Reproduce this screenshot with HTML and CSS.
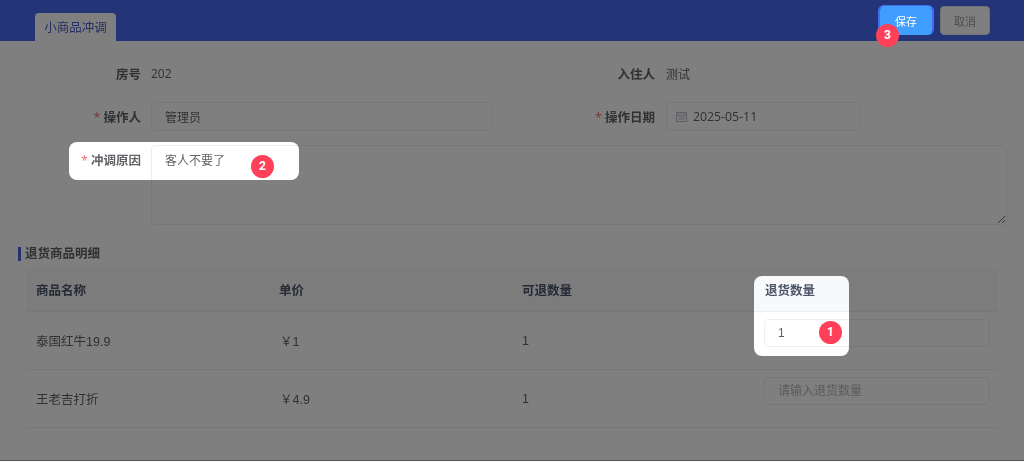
FILE: index.html
```html
<!DOCTYPE html>
<html lang="zh-CN">

<head>
    <meta charset="UTF-8">
    <meta name="viewport" content="width=device-width, initial-scale=1.0">
    <title>小商品冲调</title>
    <link rel="stylesheet" href="styles.css">
</head>

<body>
    <div class="page">
        <header class="topbar">
            <div class="tab">小商品冲调</div>
            <div class="actions">
                <button class="btn btn-save" type="button">保存</button>
                <button class="btn btn-cancel" type="button">取消</button>
            </div>
        </header>

        <form class="form">
            <div class="row">
                <div class="field">
                    <label class="label">房号</label>
                    <span class="value">202</span>
                </div>
                <div class="field field-right">
                    <label class="label">入住人</label>
                    <span class="value">测试</span>
                </div>
            </div>
            <div class="row">
                <div class="field">
                    <label class="label"><i class="req">*</i>操作人</label>
                    <input class="input input-wide" type="text" value="管理员">
                </div>
                <div class="field field-right">
                    <label class="label"><i class="req">*</i>操作日期</label>
                    <div class="date">
                        <svg class="date-icon" viewBox="0 0 11 11" width="11" height="11">
                            <path d="M.5 1.5h10v9H.5z M.5 4h10 M3 .5v2 M8 .5v2 M2.5 6h6 M2.5 8h6" fill="none" stroke="#b8bbc2" stroke-width="1"/>
                        </svg>
                        <span>2025-05-11</span>
                    </div>
                </div>
            </div>
            <div class="row">
                <div class="field field-full">
                    <label class="label label-top"><i class="req">*</i>冲调原因</label>
                    <textarea class="textarea">客人不要了</textarea>
                </div>
            </div>
        </form>

        <h3 class="section-title">退货商品明细</h3>

        <table class="goods">
            <thead>
                <tr>
                    <th>商品名称</th>
                    <th>单价</th>
                    <th>可退数量</th>
                    <th>退货数量</th>
                </tr>
            </thead>
            <tbody>
                <tr>
                    <td>泰国红牛19.9</td>
                    <td class="price">￥1</td>
                    <td>1</td>
                    <td class="qty"><input class="input input-qty" type="text" value="1" placeholder="请输入退货数量"></td>
                </tr>
                <tr>
                    <td>王老吉打折</td>
                    <td class="price">￥4.9</td>
                    <td>1</td>
                    <td class="qty"><input class="input input-qty" type="text" placeholder="请输入退货数量"></td>
                </tr>
            </tbody>
        </table>
    </div>

    <!-- guide layer: dims the page, three holes show what to fill in -->
    <div class="guide">
        <svg class="guide-mask" width="1024" height="461">
            <defs>
                <mask id="holes">
                    <rect width="1024" height="461" fill="#fff"/>
                    <rect x="69" y="142" width="230" height="38" rx="8" fill="#000"/>
                    <rect x="754" y="276" width="95" height="80" rx="8" fill="#000"/>
                    <rect x="878" y="5" width="56" height="30" rx="6" fill="#000"/>
                </mask>
            </defs>
            <rect width="1024" height="461" fill="rgba(0,0,0,0.5)" mask="url(#holes)"/>
        </svg>
        <span class="badge badge-1">1</span>
        <span class="badge badge-2">2</span>
        <span class="badge badge-3">3</span>
    </div>
</body>

</html>
```

FILE: styles.css
```css
* {
    box-sizing: border-box;
}

html, body {
    margin: 0;
    padding: 0;
}

body {
    width: 1024px;
    height: 461px;
    overflow: hidden;
    background-color: #fff;
    font-family: "Open Sans", "Noto Sans CJK SC", sans-serif;
    font-size: 12px;
    color: #606266;
}

.page {
    height: 461px;
    border-bottom: 1px solid #aaa;
    overflow: hidden;
    will-change: opacity;
}

.topbar {
    height: 41px;
    padding-left: 35px;
    padding-right: 34px;
    background-color: #466bf0;
    display: flex;
    justify-content: space-between;
}

.tab {
    width: 81px;
    height: 28px;
    margin-top: 13px;
    background-color: #fff;
    border-radius: 4px 4px 0 0;
    color: #4a62c8;
    font-size: 12.5px;
    line-height: 30px;
    text-align: center;
}

.actions {
    display: flex;
    gap: 6px;
    padding-top: 6px;
}

.btn {
    width: 50px;
    height: 29px;
    padding: 0;
    border-radius: 4px;
    font-family: inherit;
    font-size: 11px;
}

.btn-save {
    width: 56px;
    background-color: #409eff;
    border: 1px solid #409eff;
    border-left: 2px solid #3f6ff0;
    border-right: 2px solid #3f6ff0;
    border-radius: 6px;
    color: #fff;
}

.btn-cancel {
    background-color: #fff;
    border: 1px solid #e4e7ed;
    color: #969696;
}

.form {
    padding-top: 18px;
    display: flex;
    flex-direction: column;
    gap: 14px;
}

.row {
    display: flex;
}

.field {
    width: 515px;
    display: flex;
    align-items: center;
    min-height: 29px;
}

.field-right {
    width: 509px;
}

.field-full {
    width: 1007px;
    align-items: flex-start;
}

.label {
    width: 141px;
    margin-right: 10px;
    text-align: right;
    font-weight: 700;
    font-size: 12.5px;
    color: #606266;
}

.field-right .label {
    width: 140px;
    margin-right: 11px;
}

.label-top {
    padding-top: 5px;
}

.req {
    font-style: normal;
    color: #f56c6c;
    margin-right: 3px;
    font-weight: 400;
}

.value {
    color: #606266;
}

.input {
    height: 29px;
    padding: 0 13px;
    border: 1px solid #ebeef5;
    border-radius: 4px;
    background: #fff;
    color: #606266;
    font-family: inherit;
    font-size: 12px;
    outline: none;
}

.input::placeholder {
    color: #b4b7bd;
}

.input-wide {
    width: 342px;
}

.input-qty {
    width: 226px;
    height: 28px;
}

.date {
    width: 195px;
    height: 29px;
    padding-left: 9px;
    border: 1px solid #ebeef5;
    border-radius: 4px;
    display: flex;
    align-items: center;
    gap: 6px;
    font-size: 12.3px;
}

.date-icon {
    display: block;
}

.textarea {
    width: 856px;
    height: 80px;
    padding: 5px 13px;
    border: 1px solid #ebeef5;
    border-radius: 4px;
    color: #606266;
    font-family: inherit;
    font-size: 12px;
    outline: none;
    display: block;
}

.section-title {
    margin: 22px 0 7px 18px;
    padding-left: 4px;
    border-left: 3px solid #4a62d8;
    height: 14px;
    line-height: 14px;
    font-size: 12.5px;
    font-weight: 700;
    color: #606266;
}

.goods {
    width: 972px;
    margin-left: 26px;
    border-collapse: separate;
    border-spacing: 0;
    table-layout: fixed;
}

.goods th {
    height: 44px;
    padding: 0 10px;
    background-color: #f8f9fa;
    border-bottom: 1px solid #ebeef5;
    text-align: left;
    font-size: 12.5px;
    font-weight: 700;
    color: #4a5568;
}

.goods td {
    height: 58px;
    padding: 0 10px;
    border-bottom: 1px solid #ebeef5;
    font-family: "Liberation Sans", "Noto Sans CJK SC", sans-serif;
    font-size: 12.5px;
    color: #606266;
}

.goods td.qty {
    padding-top: 7px;
    padding-bottom: 22px;
}

.goods td .input {
    display: block;
    margin-left: -1px;
}

.price {
    text-indent: 1px;
}

.guide {
    position: absolute;
    left: 0;
    top: 0;
    width: 1024px;
    height: 461px;
}

.guide-mask {
    display: block;
}

.badge {
    position: absolute;
    width: 23px;
    height: 23px;
    border-radius: 50%;
    background-color: #ff4058;
    color: #fff;
    font-family: "Roboto", sans-serif;
    font-size: 12px;
    font-weight: 700;
    line-height: 23px;
    text-align: center;
}

.badge-1 {
    left: 819px;
    top: 321px;
}

.badge-2 {
    left: 251px;
    top: 155px;
}

.badge-3 {
    left: 876px;
    top: 24px;
}
```
